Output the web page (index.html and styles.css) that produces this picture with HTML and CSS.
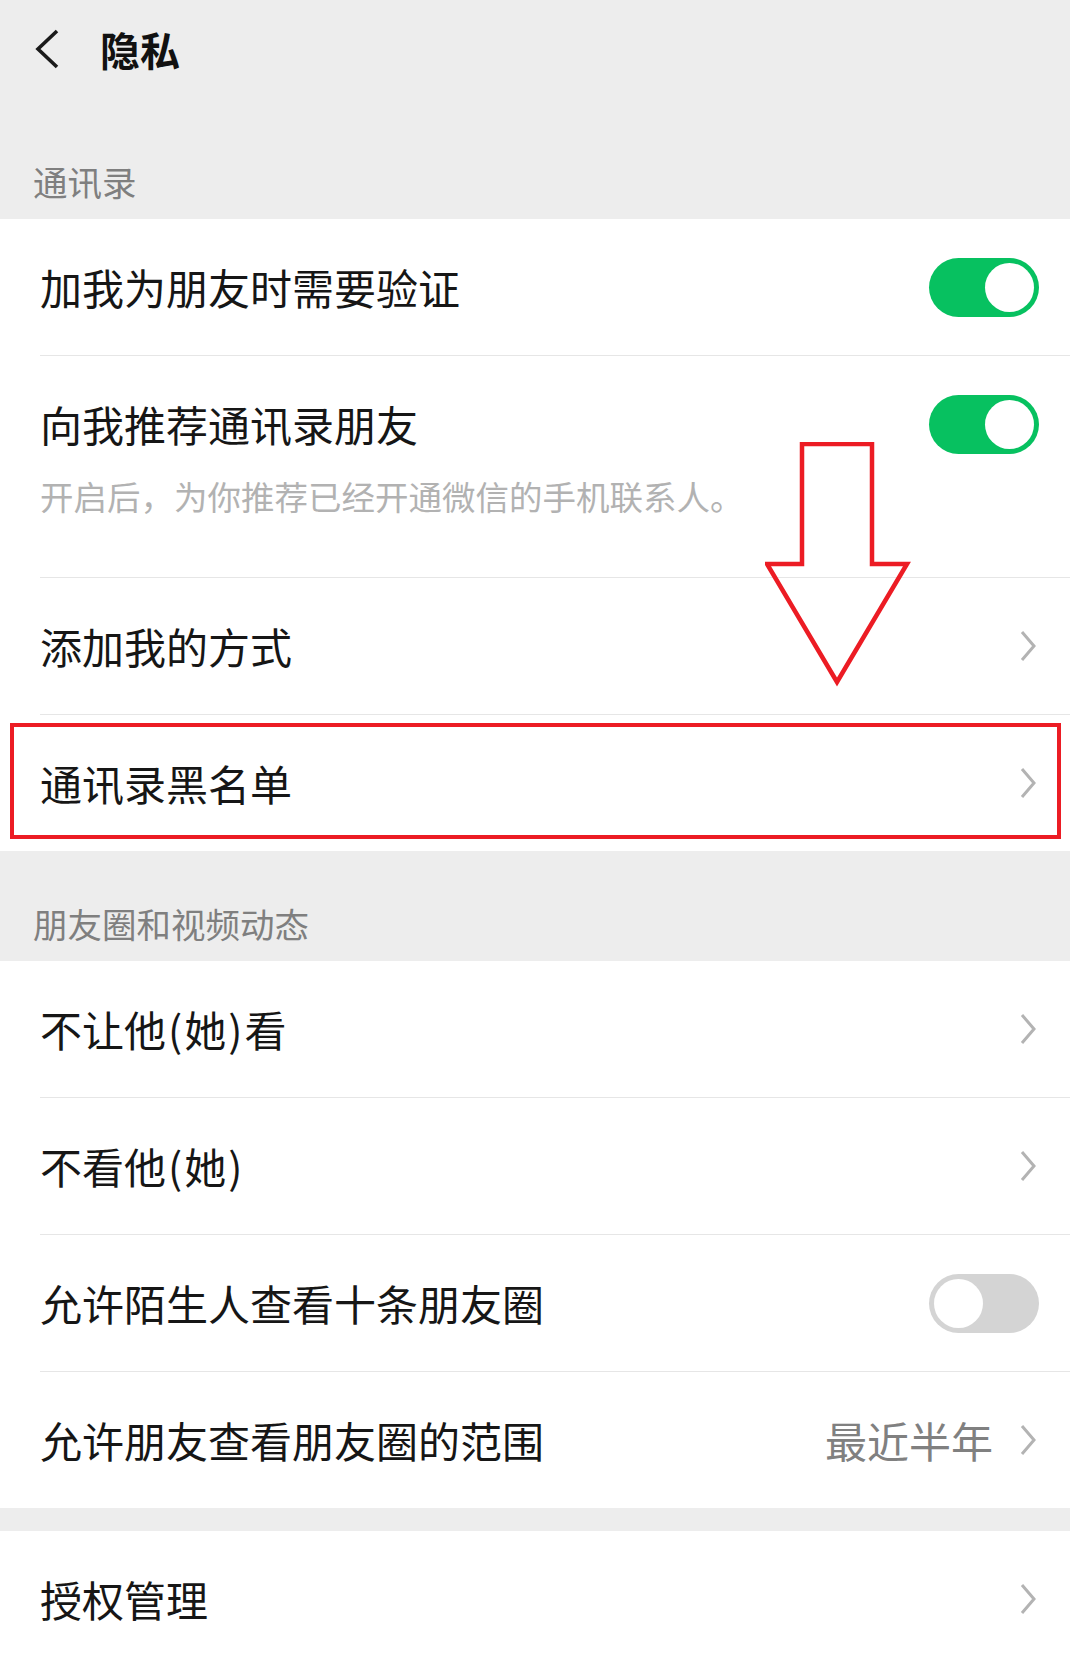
FILE: index.html
```html
<!DOCTYPE html>
<html lang="zh-CN">
<head>
<meta charset="utf-8">
<title>隐私</title>
<link rel="stylesheet" href="styles.css">
</head>
<body>
<div class="page">
  <div class="nav">
    <svg class="back" width="28" height="42" viewBox="0 0 28 42"><polyline points="24,3 5,21 24,39" fill="none" stroke="#1a1a1a" stroke-width="3.6" stroke-linejoin="miter"/></svg>
    <div class="nav-title">隐私</div>
  </div>
  <div class="group-title first">通讯录</div>
  <div class="card card-contacts">
    <div class="row r-first">
      <div class="label">加我为朋友时需要验证</div>
      <div class="toggle on"><span class="knob"></span></div>
    </div>
    <div class="row r-tall">
      <div class="row-main">
        <div class="label">向我推荐通讯录朋友</div>
        <div class="toggle on"><span class="knob"></span></div>
      </div>
      <div class="desc">开启后，为你推荐已经开通微信的手机联系人。</div>
    </div>
    <div class="row">
      <div class="label">添加我的方式</div>
      <svg class="chev" width="18" height="32" viewBox="0 0 18 32"><polyline points="3,2 15,16 3,30" fill="none" stroke="#b3b3b3" stroke-width="3"/></svg>
    </div>
    <div class="row">
      <div class="label">通讯录黑名单</div>
      <svg class="chev" width="18" height="32" viewBox="0 0 18 32"><polyline points="3,2 15,16 3,30" fill="none" stroke="#b3b3b3" stroke-width="3"/></svg>
    </div>
    <div class="highlight"></div>
    <svg class="arrow" width="150" height="250" viewBox="0 0 150 250"><polygon points="37,2 107,2 107,122 142,122 72,240 2,122 37,122" fill="none" stroke="#ec1c24" stroke-width="4.5" stroke-linejoin="miter"/></svg>
  </div>
  <div class="group-title">朋友圈和视频动态</div>
  <div class="card">
    <div class="row r-first">
      <div class="label">不让他<span class="paren">(</span>她<span class="paren">)</span>看</div>
      <svg class="chev" width="18" height="32" viewBox="0 0 18 32"><polyline points="3,2 15,16 3,30" fill="none" stroke="#b3b3b3" stroke-width="3"/></svg>
    </div>
    <div class="row">
      <div class="label">不看他<span class="paren">(</span>她<span class="paren">)</span></div>
      <svg class="chev" width="18" height="32" viewBox="0 0 18 32"><polyline points="3,2 15,16 3,30" fill="none" stroke="#b3b3b3" stroke-width="3"/></svg>
    </div>
    <div class="row">
      <div class="label">允许陌生人查看十条朋友圈</div>
      <div class="toggle off"><span class="knob"></span></div>
    </div>
    <div class="row">
      <div class="label">允许朋友查看朋友圈的范围</div>
      <div class="value">最近半年</div>
      <svg class="chev" width="18" height="32" viewBox="0 0 18 32"><polyline points="3,2 15,16 3,30" fill="none" stroke="#b3b3b3" stroke-width="3"/></svg>
    </div>
  </div>
  <div class="gap"></div>
  <div class="card">
    <div class="row r-first">
      <div class="label">授权管理</div>
      <svg class="chev" width="18" height="32" viewBox="0 0 18 32"><polyline points="3,2 15,16 3,30" fill="none" stroke="#b3b3b3" stroke-width="3"/></svg>
    </div>
  </div>
</div>
</body>
</html>
```

FILE: styles.css
```css
html, body {
  margin: 0;
  padding: 0;
}
body {
  background: #ededed;
  font-family: "Noto Sans CJK SC", "Noto Sans", sans-serif;
  color: #191919;
  width: 1070px;
  height: 1656px;
  overflow: hidden;
}
.page {
  width: 1070px;
}
.nav {
  height: 98px;
  display: flex;
  align-items: center;
  padding-left: 33px;
  box-sizing: border-box;
}
.back {
  display: block;
}
.nav-title {
  margin-left: 39px;
  font-size: 40px;
  font-weight: 700;
  line-height: 50px;
  color: #111;
}
.group-title {
  height: 110px;
  box-sizing: border-box;
  display: flex;
  align-items: flex-end;
  padding: 0 0 18px 33px;
  font-size: 34.5px;
  line-height: 40px;
  color: #7f7f7f;
}
.group-title.first {
  height: 121px;
}
.card {
  background: #fff;
  position: relative;
}
.row {
  margin-left: 40px;
  padding-right: 31px;
  height: 137px;
  box-sizing: border-box;
  border-top: 1px solid #e6e6e6;
  display: flex;
  align-items: center;
}
.row.r-first {
  border-top: none;
  height: 136px;
}
.row.r-tall {
  height: 222px;
  flex-direction: column;
  align-items: stretch;
  justify-content: flex-start;
  padding-top: 38px;
}
.row-main {
  display: flex;
  align-items: center;
  height: 60px;
}
.label {
  flex: 1;
  font-size: 42px;
  line-height: 50px;
  color: #161616;
  white-space: nowrap;
}
.paren {
  padding: 0 2px;
}
.desc {
  margin-top: 22px;
  font-size: 33.5px;
  line-height: 40px;
  color: #b2b2b2;
  white-space: nowrap;
}
.value {
  font-size: 42px;
  line-height: 50px;
  color: #808080;
  margin-right: 26px;
}
.chev {
  display: block;
  margin-right: 2px;
}
.toggle {
  width: 110px;
  height: 59px;
  border-radius: 30px;
  box-sizing: border-box;
  position: relative;
  flex: none;
}
.toggle.on {
  background: #07c160;
}
.toggle.off {
  background: #d4d4d4;
}
.knob {
  position: absolute;
  top: 5px;
  width: 49px;
  height: 49px;
  border-radius: 50%;
  background: #fff;
}
.toggle.on .knob {
  right: 5px;
}
.toggle.off .knob {
  left: 5px;
}
.gap {
  height: 23px;
}
.highlight {
  position: absolute;
  left: 10px;
  top: 504px;
  width: 1051px;
  height: 116px;
  box-sizing: border-box;
  border: 4px solid #ec1c24;
  pointer-events: none;
}
.arrow {
  position: absolute;
  left: 765px;
  top: 223px;
}
```
